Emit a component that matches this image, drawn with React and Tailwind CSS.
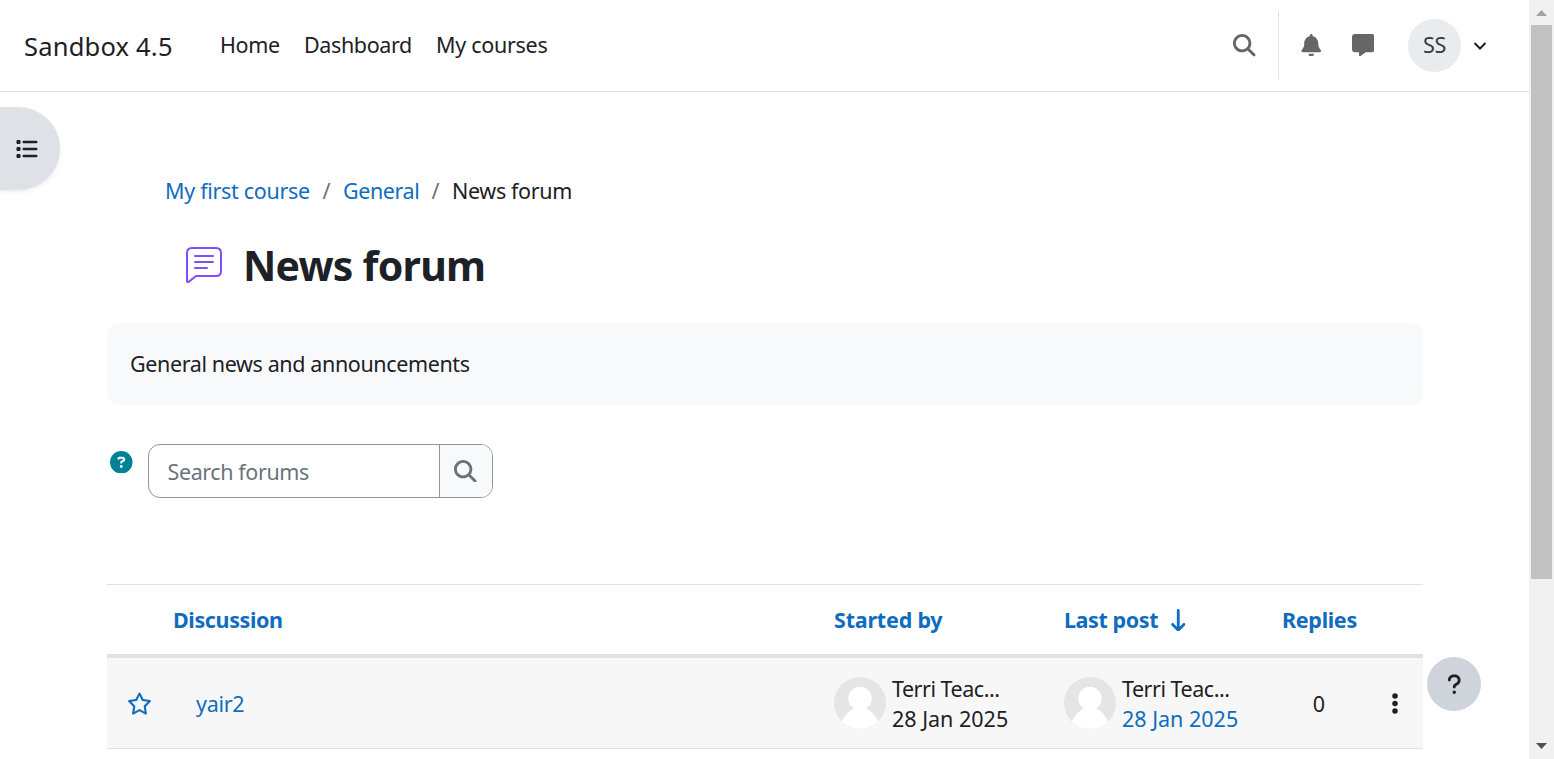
import {
  FaMagnifyingGlass,
  FaBell,
  FaMessage,
  FaCircleQuestion,
  FaRegStar,
  FaArrowDownLong,
  FaQuestion,
} from 'react-icons/fa6';

function Navbar() {
  return (
    <header className="flex h-[92px] shrink-0 items-center border-b border-[#dee2e6] pl-6">
      <a className="w-[196px] pt-px text-[25.500px] tracking-[0.2px]">Sandbox 4.5</a>
      <nav className="-mt-[2px] flex flex-1">
        <a className="w-[84px] tracking-[-0.35px]">Home</a>
        <a className="w-[132px] tracking-[-0.38px]">Dashboard</a>
        <a className="tracking-[-0.28px]">My courses</a>
      </nav>
      <div className="-mt-px flex h-[68px] w-[46px] items-center border-r border-[#dee2e6] text-[#666]">
        <FaMagnifyingGlass className="mt-px size-[22.5px]" />
      </div>
      <FaBell className="ml-[21px] size-[22.5px] text-[#666] -mt-px" />
      <FaMessage className="ml-[29px] size-[22.5px] text-[#666] -mt-px" />
      <div className="ml-[34px] flex size-[53px] items-center justify-center rounded-full bg-[#e9ecef] pb-px tracking-[-0.2px] text-[#343a40]">
        SS
      </div>
      <svg className="ml-3 mr-[42px] h-[8px] w-[14px]" viewBox="0 0 14 8" fill="none" stroke="#1d2125" strokeWidth="2">
        <path d="M1.500 1l5.500 5.500 5.500-5.500" />
      </svg>
    </header>
  );
}

function ForumIcon() {
  return (
    <svg className="size-9" viewBox="0 0 36 36" fill="none" stroke="#7f4dff" strokeWidth="2" strokeLinecap="round" strokeLinejoin="round">
      <path d="M6 1H30Q35 1 35 6V24Q35 29 30 29H10L3 34.6Q1 36 1 33.500V6Q1 1 6 1Z" />
      <path d="M9 9H27M9 15H27M9 21H21" />
    </svg>
  );
}

function ListIcon() {
  return (
    <svg className="h-[18px] w-[22px]" viewBox="0 0 22 18" fill="currentColor">
      <rect x="0.500" y="0" width="4" height="4" rx="1" />
      <rect x="0.500" y="7" width="4" height="4" rx="1" />
      <rect x="0.500" y="14" width="4" height="4" rx="1" />
      <rect x="6.500" y="0.700" width="15" height="2.500" rx="1.200" />
      <rect x="6.500" y="7.700" width="15" height="2.500" rx="1.200" />
      <rect x="6.500" y="14.700" width="15" height="2.500" rx="1.200" />
    </svg>
  );
}

function KebabIcon() {
  return (
    <svg className="h-[21px] w-[6px]" viewBox="0 0 6 21" fill="currentColor">
      <circle cx="3" cy="3" r="2.750" />
      <circle cx="3" cy="10.500" r="2.750" />
      <circle cx="3" cy="18" r="2.750" />
    </svg>
  );
}

function Avatar() {
  return (
    <svg className="-mt-px size-[52px] shrink-0" viewBox="0 0 52 52">
      <clipPath id="avatar-circle">
        <circle cx="26" cy="26" r="26" />
      </clipPath>
      <g clipPath="url(#avatar-circle)">
        <rect width="52" height="52" fill="#e5e5e5" />
        <ellipse cx="26" cy="21.500" rx="11.700" ry="11.800" fill="#fff" />
        <path d="M7 48C9 40 14 34 20 31.500H32C38 34 43 40 45 48V52H7Z" fill="#fff" />
      </g>
    </svg>
  );
}

function Author({ date, link }) {
  return (
    <div className="flex w-[230px] items-center">
      <Avatar />
      <div className="ml-[6px] pt-[2px] leading-[30px]">
        <div className="tracking-[-0.48px]">Terri Teac...</div>
        <div className={link ? 'text-[#0f6cbf]' : ''}>{date}</div>
      </div>
    </div>
  );
}

function Discussions() {
  return (
    <section className="mt-[86px] border-t border-[#dee2e6]">
      <div className="flex h-[73px] items-center border-b-4 border-[#dee2e6] pl-[66px] font-bold tracking-[-0.3px] text-[#0f6cbf]">
        <div className="w-[661px] tracking-[-0.38px]">Discussion</div>
        <div className="w-[230px] tracking-[-0.2px]">Started by</div>
        <div className="flex w-[218px] items-center tracking-[-0.4px]">
          Last post
          <FaArrowDownLong className="ml-[9px] mt-px size-[22.500px]" />
        </div>
        <div>Replies</div>
      </div>
      <div className="flex h-[91px] items-center border-b border-[#dee2e6] bg-[#f7f7f7] pl-5">
        <FaRegStar className="size-[25px] text-[#0f6cbf]" />
        <a className="ml-[44px] w-[638px] pt-[2px] tracking-[-0.3px] text-[#0f6cbf]">yair2</a>
        <Author date="28 Jan 2025" />
        <Author date="28 Jan 2025" link />
        <div className="mr-[48px] w-[50px] pt-[2px] text-center">0</div>
        <KebabIcon />
      </div>
    </section>
  );
}

function Scrollbar() {
  return (
    <div className="flex h-[759px] w-[25px] shrink-0 flex-col items-center bg-[#f1f1f1]">
      <svg className="h-[25px] w-[11px] shrink-0" viewBox="0 0 11 25">
        <path d="M0 16L5.500 10L11 16Z" fill="#a3a3a3" />
      </svg>
      <div className="h-[554px] w-[21px] bg-[#c1c1c1]" />
      <svg className="mt-auto h-[25px] w-[11px]" viewBox="0 0 11 25">
        <path d="M0 9L5.500 15L11 9Z" fill="#505050" />
      </svg>
    </div>
  );
}

export default function App() {
  return (
    <div className="relative flex h-[759px] w-[1554px] overflow-hidden bg-white font-['Noto_Sans',sans-serif] text-[21.5px] leading-[34px] text-[#1d2125]">
      <div className="flex min-w-0 flex-1 flex-col">
        <Navbar />
        <main className="w-[1423px] pl-[107px]">
          <div className="flex h-[131px] items-end pb-[15px] pl-[58px]">
            <a className="w-[145px] whitespace-nowrap tracking-[-0.3px] text-[#0f6cbf]">My first course</a>
            <span className="w-[33px] text-center text-[#6a737b]">/</span>
            <a className="w-[76px] whitespace-nowrap tracking-[-0.42px] text-[#0f6cbf]">General</a>
            <span className="w-[33px] text-center text-[#6a737b]">/</span>
            <span className="tracking-[-0.35px]">News forum</span>
          </div>
          <div className="flex h-[100px] items-start pl-[79px] pt-[24px]">
            <ForumIcon />
            <h1 className="ml-[21px] mt-[-7px] text-[41px] font-bold leading-[50px] tracking-[-0.75px]">News forum</h1>
          </div>
          <div className="flex h-[82px] items-center rounded-xl bg-[#f8f9fa] pl-[23px] tracking-[-0.38px]">General news and announcements</div>
          <div className="mt-[39px] flex">
            <FaCircleQuestion className="ml-[3px] mt-[6.500px] size-[22.500px] text-[#008196]" />
            <div className="ml-[15px] flex h-[54px] w-[345px] overflow-hidden rounded-xl border border-[#8f959e]">
              <div className="w-[290px] pl-[19px] pt-[10px] tracking-[-0.4px] text-[#6a737b]">Search forums</div>
              <div className="flex flex-1 items-center justify-center border-l border-[#8f959e] bg-[#f8f9fa] text-[#6a737b]">
                <FaMagnifyingGlass className="size-[22.500px]" />
              </div>
            </div>
          </div>
          <Discussions />
        </main>
      </div>
      <Scrollbar />
      <button className="absolute left-0 top-[107px] flex h-[83px] w-[60px] items-center rounded-r-full bg-[#dee2e6] pl-4 shadow-[0_2px_4px_rgba(0,0,0,0.075)]">
        <ListIcon />
      </button>
      <button className="absolute left-[1427px] top-[657px] flex size-[54px] items-center justify-center rounded-full bg-[#ced4da]">
        <FaQuestion className="mt-px size-[22.500px]" />
      </button>
    </div>
  );
}
